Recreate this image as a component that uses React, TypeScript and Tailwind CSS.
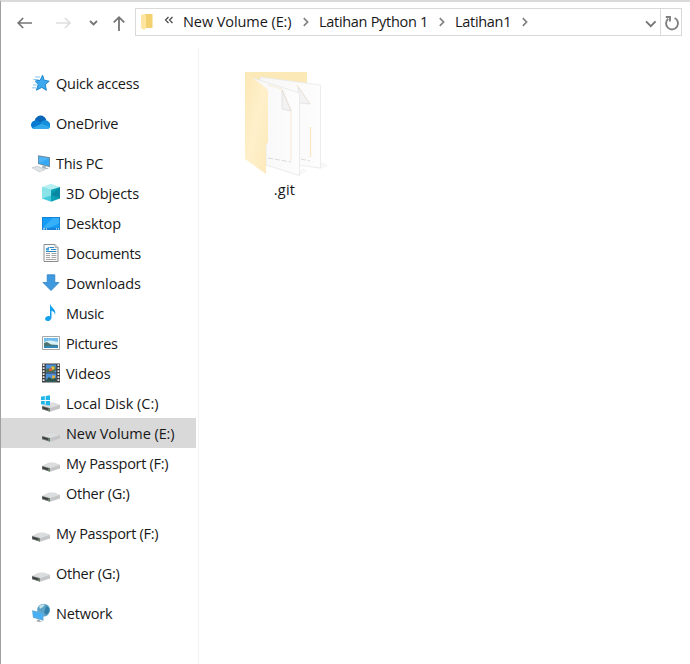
import React from "react";

type IconProps = { className?: string };

const Svg = ({ children, className = "" }: { children: React.ReactNode; className?: string }) => (
  <svg width="20" height="20" viewBox="0 0 20 20" fill="none" className={"shrink-0 " + className}>
    {children}
  </svg>
);

const StarIcon = () => (
  <Svg>
    <path d="M12.6 2.2 14.1 7.2 19.2 8.2 15.3 11.4 16.4 17.3 11.8 14.4 6.4 17.2 8.2 11.6 5.3 7.9 10.2 7.3Z" fill="#3ba9ef" stroke="#2187d0" strokeWidth="1" strokeLinejoin="round" />
    <path d="M5 4H10M3.4 6.5H8.5M5 9H6.5M3 12H7M2 14.8H6" stroke="#8ac6ee" strokeWidth="1" />
  </Svg>
);

const CloudIcon = () => (
  <Svg>
    <path d="M4.6 7.6C7 .8 14.4 1.2 16.3 7L12 12Z" fill="#0865b8" />
    <path d="M5 16C-.6 16-.1 7.6 5.2 7.4 8 7 9.5 8.8 12 10.6L7 16Z" fill="#087bd0" />
    <path d="M10.4 9.9C12.4 6.8 16.5 6.5 18.4 8.5 22 11.3 20.5 16 16.8 16L12 13Z" fill="#158edb" />
    <path d="M2.2 15 11.5 10.7 20 14C19.2 15.4 18.2 16 16.8 16H5C3.8 16 2.9 15.6 2.2 15Z" fill="#32a9ec" />
  </Svg>
);

const PcIcon = () => (
  <Svg>
    <path d="M8 2.3 20 4.3V14.3L8 11Z" fill="#6c8ba1" />
    <path d="M8.8 3.5 19 5.2V12.9L8.8 10.2Z" fill="#35a9f3" />
    <path d="M8.8 3.5 19 5.2 8.8 10.2Z" fill="#62bdf6" opacity=".55" />
    <path d="M12.5 12.3 16 13.2 15.5 14.5 19 15.5 16.6 16.3 12 14.8Z" fill="#a8b4bb" />
    <path d="M2 14.7 7.4 13.3 15 16.6 9.4 18.8Z" fill="#d5dadd" stroke="#b8bfc4" strokeWidth=".6" />
    <path d="M4 15 11.5 17.9M6 14.3 13.2 17.1" stroke="#edf0f2" strokeWidth=".7" />
  </Svg>
);

const CubeIcon = () => (
  <Svg>
    <path d="M11 .8 20 3.9 11 6.8 2 3.9Z" fill="#b6f0f2" />
    <path d="M2 3.9 11 6.8V18.8L2 15.4Z" fill="#47cadb" />
    <path d="M11 6.8 20 3.9V15.4L11 18.8Z" fill="#0ba0b4" />
    <path d="M2 3.9 11 6.8V12.5L2 15.4Z" fill="#9ae8ec" opacity=".8" />
    <path d="M20 3.9V15.4L11 11.5Z" fill="#087d9c" opacity=".7" />
  </Svg>
);

const DesktopIcon = () => (
  <Svg>
    <path d="M2 4H20V17H2Z" fill="#1683d9" />
    <path d="M3 5H19V14.8H3Z" fill="#149df5" />
    <path d="M13 5H19V10.6L9 14.8H3Z" fill="#37b0fa" />
    <path d="M3 15.9H5M6 15.9H7M16 15.9H17M18 15.9H19" stroke="#fff" />
  </Svg>
);

const DocumentIcon = () => (
  <Svg>
    <path d="M4 1.5H15L18 4.5V18.5H4Z" fill="#fafafa" stroke="#8b8e90" />
    <path d="M15 1.5V4.5H18" fill="#ddd" stroke="#999" strokeWidth=".7" />
    <path d="M9.5 4.5H14M6 5.8H8.4M11 6.5H16.3M6 8.5H16.3" stroke="#288acb" strokeWidth="1.1" />
    <path d="M6 6.6 8.2 4H9V7.5H6Z" fill="#43a4d7" />
    <path d="M6 10.5H10M11.5 10.5H16.3M6 12.5H10M11.5 12.5H16.3M6 14.5H10M11.5 14.5H16.3M6 16.5H16.3" stroke="#a5a5a5" strokeWidth="1" />
  </Svg>
);

const DownloadIcon = () => (
  <Svg>
    <path d="M7.2 1.8H14.8V9.5H19L11 17.6 3 9.5H7.2Z" fill="#3f99df" stroke="#2d82c5" strokeWidth=".8" />
  </Svg>
);

const MusicIcon = () => (
  <Svg>
    <path d="M10.2 1C11 5 16.9 6.3 15 12 14.6 8.8 12.8 8.3 11.5 7.8V14.4C11.3 18.6 5 19.3 5.1 15.8 5.2 13.6 8 12.4 10 13.2V1Z" fill="#14a0ec" />
  </Svg>
);

const PictureIcon = () => (
  <Svg>
    <path d="M2.5 3.5H19.5V16.5H2.5Z" fill="#fff" stroke="#a3a8ab" />
    <path d="M4 5H18V15H4Z" fill="#72bdec" />
    <path d="M4 9Q9 6 18 9V12H4Z" fill="#d9f0f7" />
    <path d="M4 10 7 9 11 11.5 18 12V15H4Z" fill="#4c746e" />
    <path d="M4 13 18 12.5V15H4Z" fill="#3188b7" />
  </Svg>
);

const VideoIcon = () => (
  <Svg>
    <path d="M2 .5H20V19.5H2Z" fill="#3e3e3e" />
    <path d="M3.6 1.2V19M18.4 1.2V19" stroke="#eee" strokeWidth="1.8" strokeDasharray="1.8 1.2" />
    <path d="M5.8 1.5H16.2V9.4H5.8ZM5.8 10.5H16.2V18.7H5.8Z" fill="#4c8fdb" />
    <path d="M5.8 7 8 5 10 7 12 3H15L16 7 13.5 9H6Z" fill="#4b7046" />
    <path d="M11 3.4H14.5V6.2L12.2 7Z" fill="#ebc344" />
    <path d="M9 5.5H12V8H9Z" fill="#d95b43" />
    <path d="M6 17 9 14 12 16 14 13 16 16V18.7H6Z" fill="#2c5348" />
    <path d="M12 12.4H15V14.8L12.5 16Z" fill="#e8b43c" />
  </Svg>
);

const Drive = () => (
  <>
    <path d="M2 13 9 9.8H14L20 12V15.6L10 18.8 2 16Z" fill="#c4c5c6" />
    <path d="M2.3 12.7 9.2 9.7H14L19.8 11.9 10.3 15.1Z" fill="#dcddde" />
    <path d="M2 12.9 10 15.2V18.8L2 16.2Z" fill="#6c706f" />
    <path d="M2.6 14.6 8.4 16.4" stroke="#303331" strokeWidth="1.3" />
    <path d="M8 16.3H9V17.5H8Z" fill="#4e9a5a" />
  </>
);

const DriveIcon = () => <Svg><Drive /></Svg>;

const LocalDiskIcon = () => (
  <Svg>
    <Drive />
    <path d="M1 3.7 4.8 3.1V7H1ZM5.7 3 10 2.3V7H5.7ZM1 7.9H4.8V11.8L1 11.2ZM5.7 7.9H10V12.5L5.7 11.9Z" fill="#20b5e8" />
  </Svg>
);

const NetworkIcon = () => (
  <Svg>
    <circle cx="13.6" cy="7.1" r="6.4" fill="#5aa3c6" />
    <path d="M9 3Q12 .5 15 1.6L12.8 4.2 10 5.8Z" fill="#c2e0ea" />
    <path d="M16.3 2.7 18.9 5 19.2 9 16.3 11.8 14 9.5 15.3 6Z" fill="#317fa8" />
    <path d="M2 7.3 13.5 9.8V17.7L3 14.7Z" fill="#6aabd2" />
    <path d="M2.8 8.3 12.7 10.5V16.5L3.8 13.9Z" fill="#46b0f6" />
    <path d="M8 16.2 10.3 17 9.4 18.2 13 18.5 10 19.3 6.3 18.2Z" fill="#9cabb3" />
  </Svg>
);

const BigFolder = () => (
  <svg width="90" height="110" viewBox="0 0 90 110" fill="none">
    <defs>
      <linearGradient id="folderFront" x1="0" y1="0" x2="1" y2="1">
        <stop stopColor="#fce8b6" />
        <stop offset=".5" stopColor="#fff0cb" />
        <stop offset="1" stopColor="#fce9b9" />
      </linearGradient>
      <linearGradient id="paperShade" x2="1">
        <stop stopColor="#f7f7f7" />
        <stop offset=".7" stopColor="#fbfbfb" />
        <stop offset="1" stopColor="#fdfdfd" />
      </linearGradient>
    </defs>
    <path d="M72 99 82 94 89 98 80 101ZM57 105 63 100 67 103 60 107Z" fill="#f7f7f7" />
    <path d="M5 4H67V34L24 89Z" fill="#fce9b8" />
    <path d="M20 9 80.5 17V100L58 97 28 93Z" fill="url(#paperShade)" stroke="#e9e9e9" strokeWidth=".8" />
    <path d="M57 17 70 36" stroke="#f3dfb9" strokeWidth=".9" />
    <path d="M58 19 59 35 70 36Z" fill="#f3f3f3" stroke="#e0e0e0" strokeWidth=".7" />
    <path d="M70.5 59V89" stroke="#fae5c0" strokeWidth="1.2" />
    <path d="M13 10 59.5 25V107.5L26 97V31Z" fill="url(#paperShade)" stroke="#e6e6e6" strokeWidth=".8" />
    <path d="M28 17 42 21 51 42V93" stroke="#f7ead0" strokeWidth=".9" />
    <path d="M42 22V41L51 43Z" fill="#f2f2f2" stroke="#dadada" strokeWidth=".7" />
    <path d="M28 90 51 94M61 91 70 93" stroke="#dadada" strokeDasharray="5 2" />
    <path d="M5 4 26 20Q28 21.5 28 24V74L26 77V106L5 91Z" fill="url(#folderFront)" />
  </svg>
);

const Chevron = ({ className = "" }: IconProps) => (
  <svg width="8" height="10" viewBox="0 0 8 10" fill="none" className={"shrink-0 " + className}>
    <path d="M1.8 1.2 5.6 5 1.8 8.8" stroke="#808080" strokeWidth="1.7" />
  </svg>
);

type Item = { label: string; Icon: () => React.JSX.Element; child?: boolean; active?: boolean; tracking?: string };

const groups: Item[][] = [
  [{ label: "Quick access", Icon: StarIcon }],
  [{ label: "OneDrive", Icon: CloudIcon, tracking: "tracking-[-0.2px]" }],
  [
    { label: "This PC", Icon: PcIcon, tracking: "tracking-[-0.3px]" },
    { label: "3D Objects", Icon: CubeIcon, child: true, tracking: "tracking-[-0.05px]" },
    { label: "Desktop", Icon: DesktopIcon, child: true, tracking: "tracking-[-0.15px]" },
    { label: "Documents", Icon: DocumentIcon, child: true, tracking: "tracking-[-0.3px]" },
    { label: "Downloads", Icon: DownloadIcon, child: true, tracking: "tracking-[-0.08px]" },
    { label: "Music", Icon: MusicIcon, child: true, tracking: "tracking-[-0.3px]" },
    { label: "Pictures", Icon: PictureIcon, child: true, tracking: "tracking-[-0.35px]" },
    { label: "Videos", Icon: VideoIcon, child: true, tracking: "tracking-[-0.05px]" },
    { label: "Local Disk (C:)", Icon: LocalDiskIcon, child: true, tracking: "tracking-[-0.01px]" },
    { label: "New Volume (E:)", Icon: DriveIcon, child: true, active: true, tracking: "tracking-[-0.08px]" },
    { label: "My Passport (F:)", Icon: DriveIcon, child: true, tracking: "tracking-[-0.3px]" },
    { label: "Other (G:)", Icon: DriveIcon, child: true },
  ],
  [{ label: "My Passport (F:)", Icon: DriveIcon, tracking: "tracking-[-0.3px]" }],
  [{ label: "Other (G:)", Icon: DriveIcon }],
  [{ label: "Network", Icon: NetworkIcon, tracking: "tracking-[-0.2px]" }],
];

function Toolbar() {
  return (
    <header className="flex h-[46px] shrink-0 items-start pt-1.5">
      <div className="flex h-7 items-center pl-4">
        <svg width="110" height="28" viewBox="0 0 110 28" fill="none" className="mt-0.5">
          <path d="M1 14H15M6.2 9 1.2 14 6.2 19" stroke="#757575" strokeWidth="1.7" />
          <path d="M39 14H53M48 9 53 14 48 19" stroke="#dedede" strokeWidth="1.7" />
          <path d="M73 12 76.5 15.5 80 12" stroke="#757575" strokeWidth="1.8" />
          <path d="M102 22V8M96.8 13.4 102 8.2 107.2 13.4" stroke="#757575" strokeWidth="1.8" />
        </svg>
      </div>
      <div className="ml-2 flex h-7 w-[547px] items-center border border-[#d9d9d9]">
        <svg width="14" height="18" viewBox="0 0 14 18" className="ml-1">
          <path d="M5 1H12.5V15H5Z" fill="#f3d070" />
          <path d="M1 1.5H5L6 3V15L4 17 1 15Z" fill="#ffe5a2" />
        </svg>
        <svg width="10" height="8" viewBox="0 0 10 8" fill="none" className="ml-[10px] -mt-1">
          <path d="M4.5 1 1.5 4 4.5 7M8.5 1 5.5 4 8.5 7" stroke="#444" strokeWidth="1.2" />
        </svg>
        <span className="ml-[9px] w-[109px] tracking-[-0.08px]">New Volume (E:)</span>
        <Chevron className="ml-[10px]" />
        <span className="ml-[9px] w-[109px] tracking-[-0.3px]">Latihan Python 1</span>
        <Chevron className="ml-[10px]" />
        <span className="ml-[9px] w-[56px] tracking-[-0.3px]">Latihan1</span>
        <Chevron className="ml-[10px]" />
        <svg width="12" height="8" viewBox="0 0 12 8" fill="none" className="ml-auto mr-[3px] mt-[3px]">
          <path d="M1 1.4 5.8 6.2 10.6 1.4" stroke="#757575" strokeWidth="1.9" />
        </svg>
        <div className="flex h-full w-[21px] items-center justify-center border-l border-[#d9d9d9]">
          <svg width="16" height="16" viewBox="0 0 16 16" fill="none" className="ml-px mt-px">
            <path d="M10.6 3A6 6 0 1 1 4.2 3.8M1.8 2H6V6.4" stroke="#808080" strokeWidth="1.9" />
          </svg>
        </div>
      </div>
    </header>
  );
}

export default function App() {
  return (
    <div className="flex h-[664px] w-[690px] flex-col overflow-hidden border-l border-t-2 border-l-[#a0a0a0] border-t-[#dadada] bg-white font-['Open_Sans','Noto_Sans',sans-serif] text-[14.5px] leading-5 tracking-[-0.25px] whitespace-nowrap text-[#181818]">
      <Toolbar />
      <div className="flex min-h-0 flex-1">
        <nav className="flex w-[198px] flex-col gap-2.5 border-r border-[#f3f3f3] pt-5">
          {groups.map((group, i) => (
            <div key={i}>
              {group.map(({ label, Icon, child, active, tracking = "" }) => (
                <div key={label} className={"mr-0.5 flex h-[30px] items-center gap-1.5 " + (child ? "pl-[39px] " : "pl-[29px] ") + (active ? "bg-[#d9d9d9]" : "")}>
                  <Icon />
                  <span className={"pt-0.5 " + tracking}>{label}</span>
                </div>
              ))}
            </div>
          ))}
        </nav>
        <main className="flex-1 pt-5 pl-[41px]">
          <div className="flex w-[90px] flex-col items-center">
            <BigFolder />
            <span className="mt-0.5 mr-px tracking-[0.2px]">.git</span>
          </div>
        </main>
      </div>
    </div>
  );
}
